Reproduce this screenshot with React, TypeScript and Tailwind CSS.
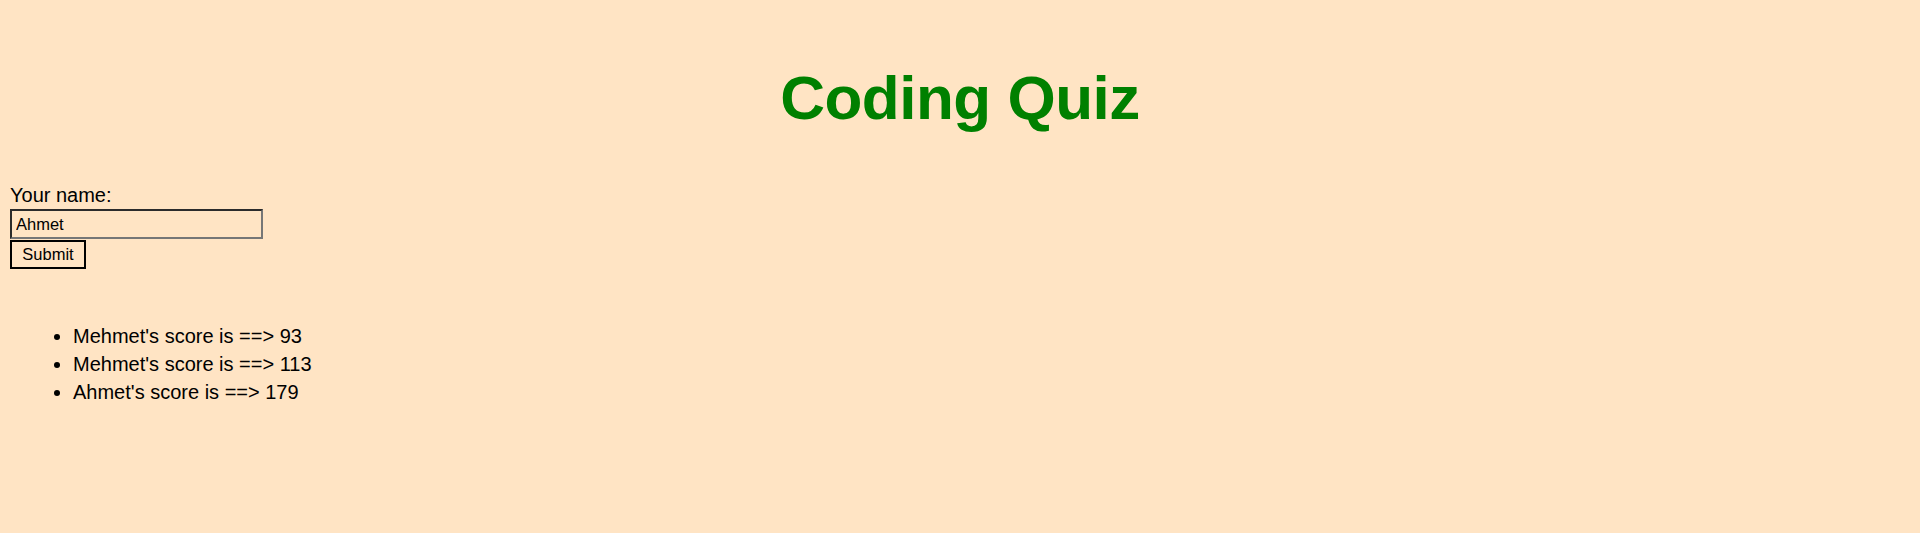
import { useState } from "react"

const scores = [
  { name: "Mehmet", score: 93 },
  { name: "Mehmet", score: 113 },
  { name: "Ahmet", score: 179 },
]

export default function App() {
  const [name, setName] = useState("Ahmet")

  return (
    <main
      className="min-h-screen bg-[#ffe4c4] p-[10px] text-black text-[20px]"
      style={{ fontFamily: '"Comic Sans MS", "Liberation Sans", sans-serif' }}
    >
      {/* title */}
      <h1 className="mt-[52px] text-center text-[62px] leading-[72px] font-bold tracking-[-0.5px] text-[#008000]">
        Coding Quiz
      </h1>

      {/* form */}
      <form className="mt-[48px] flex flex-col items-start" onSubmit={e => e.preventDefault()}>
        <label htmlFor="name" className="leading-[27px]">Your name:</label>
        <input
          id="name"
          value={name}
          onChange={e => setName(e.target.value)}
          className="h-[30px] w-[253px] border-2 border-t-[#2b2b2b] border-l-[#2b2b2b] border-b-[#767676] border-r-[#767676] bg-transparent px-[4px] text-[16.5px] outline-none"
        />
        <button
          type="submit"
          className="mt-[1px] h-[29px] w-[76px] border-2 border-black bg-transparent text-[16.5px]"
        >
          Submit
        </button>
      </form>

      {/* scores */}
      <ul className="mt-[53px] list-disc pl-[63px] leading-[28px]">
        {scores.map((s, i) => (
          <li key={i}>{s.name}'s score is ==&gt; {s.score}</li>
        ))}
      </ul>
    </main>
  )
}
